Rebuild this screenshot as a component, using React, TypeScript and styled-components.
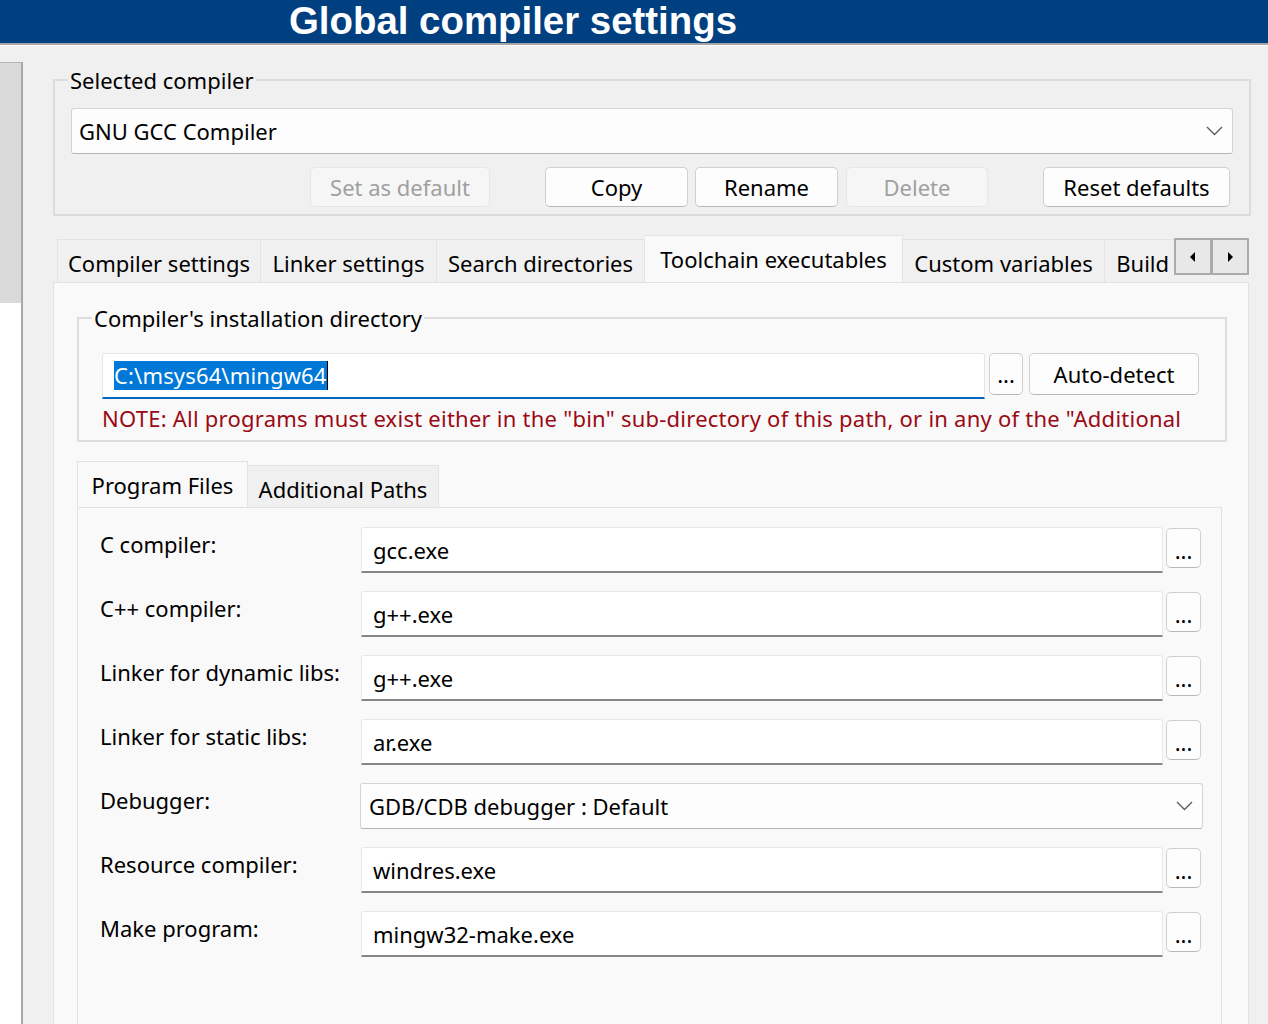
import styled, { createGlobalStyle } from 'styled-components';

const GlobalStyle = createGlobalStyle`
  html, body {
    margin: 0;
    padding: 0;
    background: #f0f0f0;
  }
  body {
    font-family: 'Noto Sans', 'Open Sans', sans-serif;
    font-size: 22px;
    color: #000;
  }
  * {
    box-sizing: border-box;
  }
`;

const Window = styled.div`
  width: 1268px;
  height: 1024px;
  overflow: hidden;
  display: flex;
  flex-direction: column;
  background: #f0f0f0;
`;

const TitleBar = styled.header`
  flex-shrink: 0;
  height: 45px;
  background: #004080;
  border-bottom: 2px solid #a6a6a6;
  box-shadow: 0 1px 0 #ffffff;
  padding-left: 289px;
  font: bold 38.4px 'Liberation Sans', Arial, sans-serif;
  line-height: 41px;
  color: #ffffff;
  white-space: nowrap;
`;

const Body = styled.div`
  flex: 1;
  display: flex;
  min-height: 0;
`;

const SideList = styled.div`
  flex-shrink: 0;
  width: 23px;
  margin-top: 17px;
  background: #ffffff;
  border-top: 1px solid #b4b4b4;
  border-right: 2px solid #a8a8a8;
`;

const SideHighlight = styled.div`
  height: 240px;
  background: #dadada;
`;

const Content = styled.main`
  width: 1198px;
  margin-left: 30px;
  padding-top: 20px;
  display: flex;
  flex-direction: column;
`;

const Group = styled.fieldset<{ $pad: string }>`
  margin: 0;
  border: 2px solid #dcdcdc;
  padding: ${(p) => p.$pad};
  min-width: 0;
`;

const GroupLabel = styled.legend<{ $shift: number }>`
  margin-left: ${(p) => p.$shift}px;
  padding: 0 2px;
  line-height: 30px;
  color: #000;
`;

const Combo = styled.div`
  height: 46px;
  display: flex;
  align-items: center;
  justify-content: space-between;
  padding: 0 9px 0 7px;
  background: #fdfdfd;
  border: 1px solid #d4d4d4;
  border-bottom-color: #b4b4b4;
  border-radius: 3px;
  line-height: 30px;
  white-space: nowrap;
`;

const ButtonRow = styled.div`
  display: flex;
  margin-top: 13px;
  padding-left: 239px;
`;

const Gap = styled.div<{ $w: number }>`
  flex-shrink: 0;
  width: ${(p) => p.$w}px;
`;

const Button = styled.button<{ $w: number; $h?: number }>`
  flex-shrink: 0;
  width: ${(p) => p.$w}px;
  height: ${(p) => p.$h ?? 40}px;
  padding: 0;
  font-family: inherit;
  font-size: 22px;
  line-height: 30px;
  color: #000;
  background: #fdfdfd;
  border: 1px solid #d0d0d0;
  border-bottom-color: #b8b8b8;
  border-radius: 5px;
  white-space: nowrap;

  &:disabled {
    color: #a0a0a0;
    background: #f6f6f6;
    border-color: #e6e6e6;
  }
`;

const TabStrip = styled.div<{ $top: number; $h: number }>`
  display: flex;
  align-items: flex-end;
  height: ${(p) => p.$h}px;
  margin-top: ${(p) => p.$top}px;
  position: relative;
  z-index: 1;
`;

const TabList = styled.div<{ $inset: number }>`
  flex: 1;
  display: flex;
  align-items: flex-end;
  height: 100%;
  padding-left: ${(p) => p.$inset}px;
  overflow: hidden;
`;

const Tab = styled.div<{ $w: number; $active?: boolean }>`
  flex-shrink: 0;
  width: ${(p) => p.$w}px;
  height: ${(p) => (p.$active ? 'calc(100% + 2px)' : 'calc(100% - 4px)')};
  margin-bottom: ${(p) => (p.$active ? '-2px' : '0')};
  padding-top: 8px;
  text-align: center;
  line-height: 30px;
  white-space: nowrap;
  background: ${(p) => (p.$active ? '#f9f9f9' : '#f0f0f0')};
  border: 1px solid #e3e3e3;
  border-bottom: none;
  & + & {
    border-left: none;
  }
`;

const ScrollArrows = styled.div`
  flex-shrink: 0;
  align-self: flex-start;
  display: flex;
  margin: 3px 2px 0 0;
  border: 2px solid #ababab;
  background: #ababab;
  gap: 3px;
`;

const ArrowButton = styled.div`
  width: 34px;
  height: 33px;
  display: flex;
  align-items: center;
  justify-content: center;
  background: #e8e8e8;
`;

const Panel = styled.section<{ $w?: number; $pad: string }>`
  flex: 1;
  ${(p) => (p.$w ? `width: ${p.$w}px;` : '')}
  display: flex;
  flex-direction: column;
  background: #f9f9f9;
  border: 1px solid #e2e2e2;
  border-bottom: none;
  padding: ${(p) => p.$pad};
`;

const PathRow = styled.div`
  display: flex;
  align-items: flex-start;
`;

const PathInput = styled.div`
  width: 883px;
  height: 46px;
  display: flex;
  align-items: center;
  padding-left: 11px;
  background: #ffffff;
  border: 1px solid #e6e6e6;
  border-bottom: 2px solid #0067c0;
  border-radius: 3px 3px 0 0;
`;

const Selection = styled.span`
  background: #0078d7;
  color: #ffffff;
  line-height: 29px;
  letter-spacing: 0.15px;
  white-space: nowrap;
`;

const Caret = styled.span`
  width: 1px;
  height: 29px;
  background: #000;
`;

const Note = styled.div`
  margin-top: 4px;
  line-height: 30px;
  letter-spacing: 0.24px;
  color: #9b0a14;
  white-space: nowrap;
  overflow: hidden;
`;

const FieldList = styled.div`
  display: flex;
  flex-direction: column;
  gap: 18px;
`;

const FieldRow = styled.div`
  display: flex;
  align-items: flex-start;
  height: 46px;
`;

const FieldLabel = styled.div`
  flex-shrink: 0;
  width: 261px;
  padding-top: 2px;
  line-height: 30px;
  white-space: nowrap;
`;

const FieldInput = styled.div`
  flex-shrink: 0;
  width: 802px;
  height: 46px;
  display: flex;
  align-items: center;
  padding-left: 11px;
  background: #ffffff;
  border: 1px solid #e8e8e8;
  border-bottom: 2px solid #868686;
  border-radius: 3px 3px 0 0;
  line-height: 30px;
  white-space: nowrap;
`;

const BrowseButton = styled(Button)`
  margin: 1px 0 0 3px;
  padding-top: 4px;
`;

const FieldSelect = styled(Combo)`
  width: 843px;
  margin-left: -1px;
  padding-left: 8px;
`;

function Chevron() {
  return (
    <svg width="17" height="10" viewBox="0 0 17 10">
      <polyline points="1,1 8.5,8.5 16,1" fill="none" stroke="#5a5a5a" strokeWidth="1.3" />
    </svg>
  );
}

function Triangle({ dir }: { dir: 'left' | 'right' }) {
  return (
    <svg width="6" height="10" viewBox="0 0 6 10">
      {dir === 'left' ? <polygon points="5,0 5,10 0,5" fill="#000" /> : <polygon points="1,0 1,10 6,5" fill="#000" />}
    </svg>
  );
}

const outerTabs = [
  { label: 'Compiler settings', w: 204 },
  { label: 'Linker settings', w: 176 },
  { label: 'Search directories', w: 208 },
  { label: 'Toolchain executables', w: 258, active: true },
  { label: 'Custom variables', w: 202 },
  { label: 'Build options', w: 160 },
];

const tools = [
  { label: 'C compiler:', value: 'gcc.exe' },
  { label: 'C++ compiler:', value: 'g++.exe' },
  { label: 'Linker for dynamic libs:', value: 'g++.exe' },
  { label: 'Linker for static libs:', value: 'ar.exe' },
  { label: 'Debugger:', value: 'GDB/CDB debugger : Default', select: true },
  { label: 'Resource compiler:', value: 'windres.exe' },
  { label: 'Make program:', value: 'mingw32-make.exe' },
];

export default function App() {
  return (
    <Window>
      <GlobalStyle />
      <TitleBar>Global compiler settings</TitleBar>
      <Body>
        <SideList>
          <SideHighlight />
        </SideList>
        <Content>
          <Group $pad="13px 16px 7px 16px">
            <GroupLabel $shift={-3}>Selected compiler</GroupLabel>
            <Combo>
              <span>GNU GCC Compiler</span>
              <Chevron />
            </Combo>
            <ButtonRow>
              <Button $w={180} disabled>Set as default</Button>
              <Gap $w={55} />
              <Button $w={143}>Copy</Button>
              <Gap $w={7} />
              <Button $w={143}>Rename</Button>
              <Gap $w={8} />
              <Button $w={142} disabled>Delete</Button>
              <Gap $w={55} />
              <Button $w={187}>Reset defaults</Button>
            </ButtonRow>
          </Group>

          <TabStrip $top={19} $h={47}>
            <TabList $inset={4}>
              {outerTabs.map((t) => (
                <Tab key={t.label} $w={t.w} $active={t.active}>
                  {t.label}
                </Tab>
              ))}
            </TabList>
            <ScrollArrows>
              <ArrowButton>
                <Triangle dir="left" />
              </ArrowButton>
              <ArrowButton>
                <Triangle dir="right" />
              </ArrowButton>
            </ScrollArrows>
          </TabStrip>

          <Panel $w={1196} $pad="20px 21px 0 23px">
            <Group $pad="20px 23px 7px 23px">
              <GroupLabel $shift={-10}>Compiler's installation directory</GroupLabel>
              <PathRow>
                <PathInput>
                  <Selection>C:\msys64\mingw64</Selection>
                  <Caret />
                </PathInput>
                <Gap $w={4} />
                <Button $w={34} $h={42}>...</Button>
                <Gap $w={6} />
                <Button $w={170} $h={42}>Auto-detect</Button>
              </PathRow>
              <Note>
                NOTE: All programs must exist either in the "bin" sub-directory of this path, or in any of the "Additional
              </Note>
            </Group>

            <TabStrip $top={19} $h={46}>
              <TabList $inset={0}>
                <Tab $w={171} $active>
                  Program Files
                </Tab>
                <Tab $w={191}>Additional Paths</Tab>
              </TabList>
            </TabStrip>

            <Panel $w={1145} $pad="19px 0 0 22px">
              <FieldList>
                {tools.map((t) => (
                  <FieldRow key={t.label}>
                    <FieldLabel>{t.label}</FieldLabel>
                    {t.select ? (
                      <FieldSelect>
                        <span>{t.value}</span>
                        <Chevron />
                      </FieldSelect>
                    ) : (
                      <>
                        <FieldInput>{t.value}</FieldInput>
                        <BrowseButton $w={35}>...</BrowseButton>
                      </>
                    )}
                  </FieldRow>
                ))}
              </FieldList>
            </Panel>
          </Panel>
        </Content>
      </Body>
    </Window>
  );
}
